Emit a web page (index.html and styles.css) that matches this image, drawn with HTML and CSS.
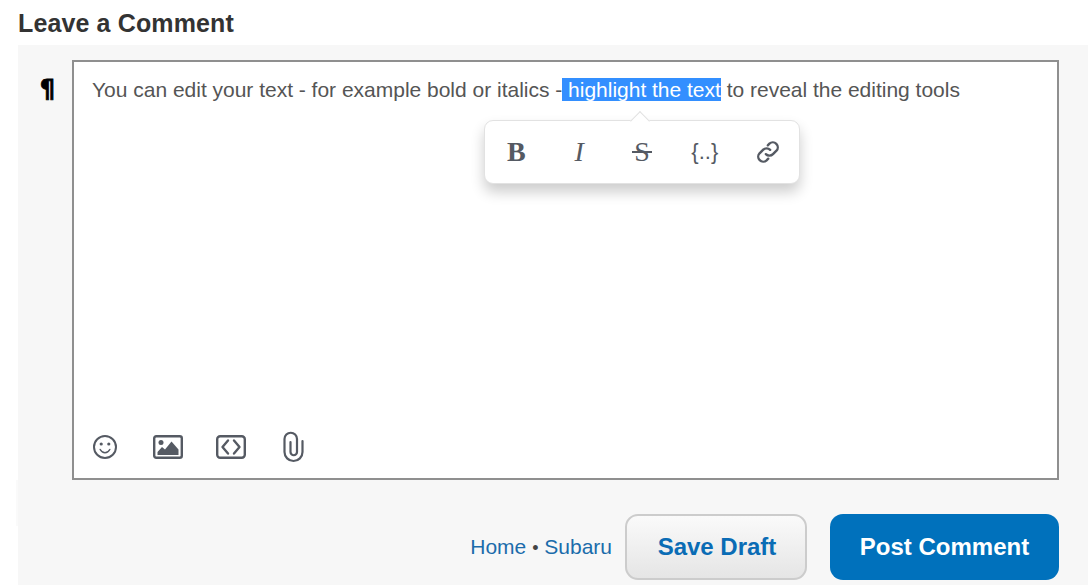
FILE: index.html
```html
<!DOCTYPE html>
<html lang="en">
<head>
<meta charset="utf-8">
<title>Leave a Comment</title>
<link rel="stylesheet" href="styles.css">
</head>
<body>
<h2 class="title">Leave a Comment</h2>
<section class="panel">
  <div class="composer">
    <button class="format" type="button">¶</button>
    <div class="editor">
      <p class="text">You can edit your text - for example bold or italics -<span class="sel"> highlight the text</span> to reveal the editing tools</p>
      <div class="bubble">
        <span class="tool tool-b">B</span>
        <span class="tool tool-i">I</span>
        <span class="tool tool-s">S</span>
        <span class="tool tool-c">{..}</span>
        <span class="tool">
          <svg width="26" height="26" viewBox="0 0 24 24" fill="none" stroke="#555a63" stroke-width="2.200" stroke-linecap="round" stroke-linejoin="round"><path d="M10 14a4.600 4.600 0 0 0 6.600 0l3.200-3.200a4.600 4.600 0 0 0-6.500-6.500l-1.500 1.500"/><path d="M14 10a4.600 4.600 0 0 0-6.600 0l-3.200 3.200a4.600 4.600 0 0 0 6.500 6.500l1.500-1.500"/></svg>
        </span>
      </div>
      <div class="attach">
        <svg class="ic ic-smile" width="26" height="26" viewBox="0 0 26 26" fill="none" stroke="#555a63" stroke-width="2"><circle cx="13" cy="13" r="11"/><circle cx="9.200" cy="10" r="1.600" fill="#555a63" stroke="none"/><circle cx="16.800" cy="10" r="1.600" fill="#555a63" stroke="none"/><path d="M8.200 15.500c1.300 2.400 3 3.300 4.800 3.300s3.500-.9 4.800-3.300" stroke-width="1.500" stroke-linecap="round"/></svg>
        <svg class="ic" width="30" height="24" viewBox="0 0 30 24" fill="none"><rect x="1.200" y="1.200" width="27.600" height="21.600" rx="2" stroke="#555a63" stroke-width="2.400"/><circle cx="8" cy="7.500" r="2.500" fill="#555a63"/><path d="M4.500 20v-3l4.500-5 3 2.500 6.500-8 7 8v5.500z" fill="#555a63"/></svg>
        <svg class="ic" width="30" height="24" viewBox="0 0 30 24" fill="none" stroke="#555a63" stroke-width="2.400"><rect x="1.200" y="1.200" width="27.600" height="21.600" rx="3"/><path d="M12 5.500l-5.500 6.500 5.500 6.500M18 5.500l5.500 6.500-5.500 6.500" stroke-linecap="round" stroke-linejoin="round"/></svg>
        <svg class="ic ic-clip" width="26" height="32" viewBox="0 0 26 32" fill="none" stroke="#555a63" stroke-width="2.200" stroke-linecap="round"><path transform="translate(3.500)" d="M8 11v10a3.250 3.250 0 0 0 6.500 0V8a6.250 6.250 0 0 0-12.500 0v13a9 9 0 0 0 18 0V10"/></svg>
      </div>
    </div>
  </div>
  <div class="actions">
    <nav class="crumbs"><a href="#">Home</a> <span class="dot">•</span> <a href="#">Subaru</a></nav>
    <button class="btn btn-draft" type="button">Save Draft</button>
    <button class="btn btn-post" type="button">Post Comment</button>
  </div>
</section>
</body>
</html>
```
FILE: styles.css
```css
* { box-sizing: border-box; }
html, body { margin: 0; height: 100%; overflow: hidden; background: #fff; }
body { font-family: "Liberation Sans", Arial, sans-serif; padding-left: 18px; }
.title { margin: 0; height: 45px; padding-top: 8px; font-size: 25px; line-height: 30px; font-weight: 700; color: #333; letter-spacing: .13px; }
.panel { position: relative; background: #f7f7f7; height: 540px; padding: 15px 29px 0 0; }
.panel::before { content: ""; position: absolute; left: -2px; top: 435px; width: 2px; height: 46px; background: #fafafa; }
.composer { display: flex; }
.format { width: 54px; height: 58px; padding: 0 0 0 5px; border: 0; background: none; font: 700 24px/30px "DejaVu Sans", sans-serif; color: #000; text-align: center; -webkit-text-stroke: .8px #000; }
.editor { position: relative; flex: 1; height: 420px; background: #fff; border: 2px solid #8f8f8f; display: flex; flex-direction: column; justify-content: space-between; padding: 14px 18px 15px; }
.text { margin: 0; font-size: 21px; line-height: 28px; color: #555; white-space: nowrap; letter-spacing: -.01px; }
.sel { background: #338fff; color: #fff; }
.bubble { position: absolute; left: 410px; top: 58px; width: 316px; height: 64px; background: #fff; border-radius: 9px; border: 1px solid #e2e2e2; box-shadow: 0 8px 14px rgba(0,0,0,.2); display: flex; align-items: center; }
.bubble::before { content: ""; position: absolute; left: 148px; top: -7px; width: 13px; height: 13px; background: #fff; border-left: 1px solid #e2e2e2; border-top: 1px solid #e2e2e2; transform: rotate(45deg); }
.tool { position: relative; flex: none; width: 62.800px; color: #555a63; display: flex; justify-content: center; align-items: center; font-family: "Liberation Serif", serif; font-size: 28px; line-height: 30px; }
.tool-b { font-weight: 700; }
.tool-i { font-style: italic; }
.tool-s::after { content: ""; position: absolute; left: 21px; top: 14px; width: 20px; height: 2px; background: #555a63; }
.tool-c { font-family: "Liberation Sans", sans-serif; font-size: 22px; }
.attach { display: flex; align-items: center; gap: 33px; height: 32px; }
.attach .ic { flex: none; }
.attach .ic-smile { margin-right: 2px; }
.actions { display: flex; justify-content: flex-end; align-items: center; margin-top: 34px; }
.crumbs { font-size: 21px; color: #444; margin-right: 13px; }
.crumbs a { color: #1b6cab; text-decoration: none; }
.dot { font-size: 18px; }
.btn { height: 66px; border-radius: 13px; font: 700 24px "Liberation Sans", sans-serif; cursor: pointer; }
.btn-draft { width: 182px; margin-right: 23px; padding-left: 8px; color: #0a6cb5; border: 2px solid #ccc; background: linear-gradient(#fafafa, #e5e5e5); }
.btn-post { width: 229px; color: #fff; border: 0; background: #0071bc; }
```
